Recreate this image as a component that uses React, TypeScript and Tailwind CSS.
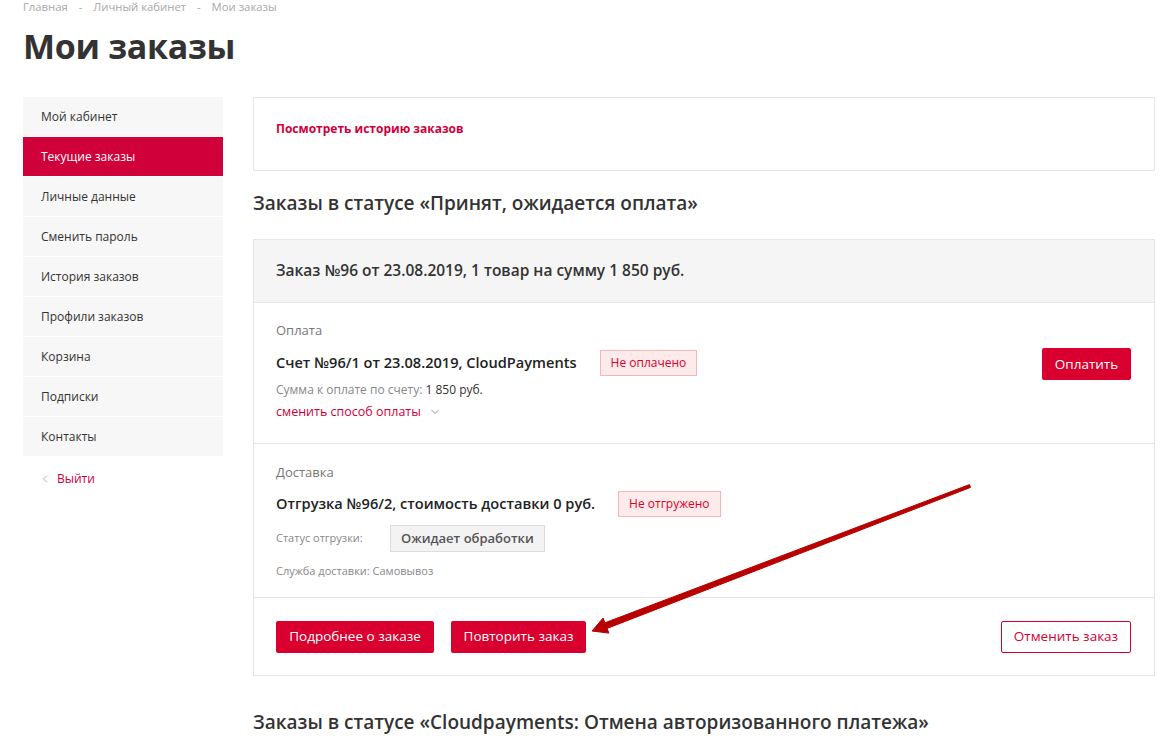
import { ChevronLeft, ChevronDown } from 'lucide-react';

const menu = [
  'Мой кабинет',
  'Текущие заказы',
  'Личные данные',
  'Сменить пароль',
  'История заказов',
  'Профили заказов',
  'Корзина',
  'Подписки',
  'Контакты',
];

export default function App() {
  return (
    <div
      className="relative min-h-[749px] bg-white text-[#333] overflow-hidden"
      style={{ fontFamily: '"Open Sans", "Noto Sans", sans-serif' }}
    >
      <div className="pl-[23px] pr-[14px]">
        <div className="text-[11.3px] leading-[13px] text-[#a8a8a8] h-[13px]">
          Главная <span className="mx-[8px]">-</span> Личный кабинет <span className="mx-[8px]">-</span> Мои заказы
        </div>
        <h1 className="mt-[13px] text-[34px] leading-[40px] font-bold tracking-[-0.3px] text-[#333]">Мои заказы</h1>

        <div className="mt-[31px] flex gap-[30px]">
          {/* sidebar */}
          <div className="w-[200px] shrink-0">
            <div className="flex flex-col gap-[1px] bg-white">
              {menu.map((item, i) => (
                <div
                  key={item}
                  className={
                    i === 1
                      ? 'h-[39px] flex items-center pl-[18px] text-[12px] bg-[#d0003a] text-white'
                      : 'h-[39px] flex items-center pl-[18px] text-[12px] bg-[#f7f7f7] text-[#333]'
                  }
                >
                  {item}
                </div>
              ))}
            </div>
            <div className="mt-[14px] pl-[16px] flex items-center gap-[6px] text-[12px] text-[#d0003a]">
              <ChevronLeft size={12} className="text-[#999]" strokeWidth={1.5} />
              Выйти
            </div>
          </div>

          {/* main */}
          <div className="flex-1 min-w-0">
            <div className="h-[74px] border border-[#e5e5e5] pl-[22px] pt-[17px]">
              <span className="text-[12px] font-bold text-[#d0003a]">Посмотреть историю заказов</span>
            </div>

            <h2 className="mt-[19px] text-[19px] leading-[26px] font-semibold text-[#333]">
              Заказы в статусе «Принят, ожидается оплата»
            </h2>

            <div className="mt-[23px] border border-[#e5e5e5]">
              <div className="h-[63px] bg-[#f5f5f5] border-b border-[#e5e5e5] flex items-center pl-[22px]">
                <span className="text-[15.5px] font-semibold text-[#333]">
                  Заказ №96 от 23.08.2019, 1 товар на сумму 1 850 руб.
                </span>
              </div>

              {/* payment */}
              <div className="h-[141px] border-b border-[#e5e5e5] pl-[22px] pr-[23px] pt-[18px] flex justify-between">
                <div>
                  <div className="text-[13px] leading-[18px] text-[#777]">Оплата</div>
                  <div className="mt-[11px] flex items-center">
                    <span className="text-[14.6px] font-semibold text-[#222]">Счет №96/1 от 23.08.2019, CloudPayments</span>
                    <span className="ml-[23px] h-[26px] px-[10px] flex items-center bg-[#fdeaea] border border-[#f4b6b6] text-[12px] text-[#e0002a]">
                      Не оплачено
                    </span>
                  </div>
                  <div className="mt-[6px] text-[12px] leading-[16px] text-[#888]">
                    Сумма к оплате по счету: <span className="text-[#333]">1 850 руб.</span>
                  </div>
                  <div className="mt-[5px] flex items-center text-[12.5px] text-[#d0003a]">
                    сменить способ оплаты
                    <ChevronDown size={12} className="ml-[8px] text-[#666]" strokeWidth={1.5} />
                  </div>
                </div>
                <div className="pt-[27px]">
                  <button className="h-[32px] w-[89px] rounded-[2px] bg-[#d9002f] text-white text-[13.5px]">Оплатить</button>
                </div>
              </div>

              {/* delivery */}
              <div className="h-[154px] border-b border-[#e5e5e5] px-[22px] pt-[19px]">
                <div className="text-[13px] leading-[18px] text-[#777]">Доставка</div>
                <div className="mt-[10px] flex items-center">
                  <span className="text-[14.6px] font-semibold text-[#222]">Отгрузка №96/2, стоимость доставки 0 руб.</span>
                  <span className="ml-[23px] h-[26px] px-[10px] flex items-center bg-[#fdeaea] border border-[#f4b6b6] text-[12px] text-[#e0002a]">
                    Не отгружено
                  </span>
                </div>
                <div className="mt-[8px] flex items-center">
                  <span className="text-[11px] text-[#888] w-[114px]">Статус отгрузки:</span>
                  <span className="h-[27px] px-[10px] flex items-center bg-[#f3f3f3] border border-[#dcdcdc] text-[13px] font-semibold text-[#555]">
                    Ожидает обработки
                  </span>
                </div>
                <div className="mt-[11px] text-[11px] text-[#888]">Служба доставки: Самовывоз</div>
              </div>

              {/* footer */}
              <div className="h-[77px] pl-[22px] pr-[23px] flex items-center justify-between">
                <div className="flex gap-[17px]">
                  <button className="h-[32px] w-[158px] rounded-[2px] bg-[#d9002f] text-white text-[13.5px]">Подробнее о заказе</button>
                  <button className="h-[32px] w-[135px] rounded-[2px] bg-[#d9002f] text-white text-[13.5px]">Повторить заказ</button>
                </div>
                <button className="h-[32px] w-[130px] rounded-[2px] border border-[#d9002f] text-[#d9002f] text-[13.5px] bg-white">
                  Отменить заказ
                </button>
              </div>
            </div>

            <h2 className="mt-[33px] text-[19px] leading-[26px] font-semibold text-[#333]">
              Заказы в статусе «Cloudpayments: Отмена авторизованного платежа»
            </h2>
          </div>
        </div>
      </div>

      {/* annotation arrow */}
      <svg className="absolute left-0 top-0 pointer-events-none" width="1169" height="749">
        <polygon
          points="970.5,487.4 969.5,484.6 604.9,622.8 603.1,618.1 592,631 608.9,633.1 607.1,628.4"
          fill="#b80000"
          stroke="#b80000"
          strokeWidth="1"
          strokeLinejoin="round"
        />
      </svg>
    </div>
  );
}
